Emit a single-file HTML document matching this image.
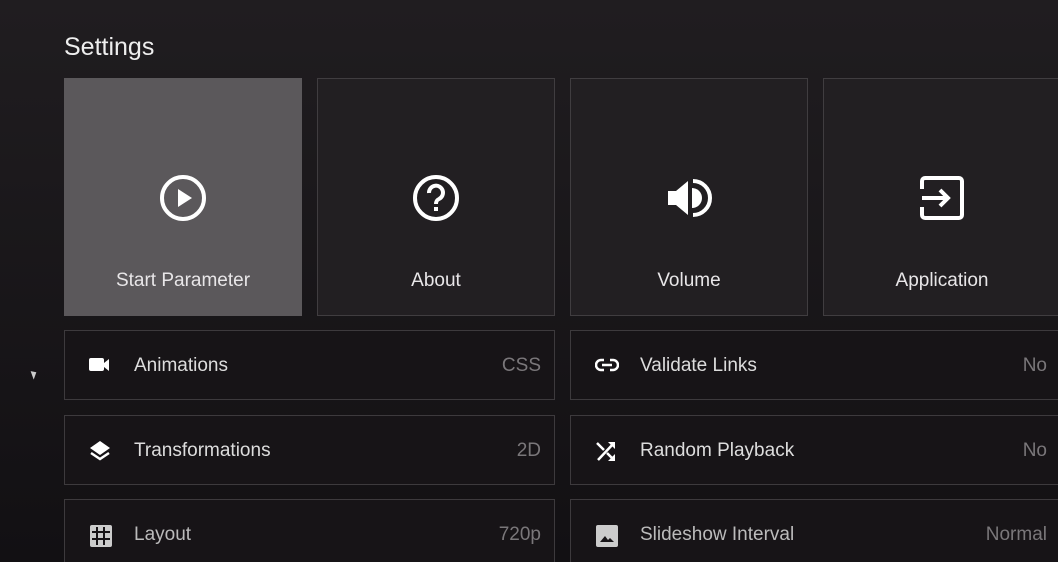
<!DOCTYPE html><html><head><style>
html,body{margin:0;width:1058px;height:562px;overflow:hidden}
body{background:linear-gradient(#201d20,#121013);font-family:"Liberation Sans",sans-serif;color:#e8e6e8;position:relative}
h1{position:absolute;left:64px;top:33px;margin:0;font-weight:normal;font-size:25px;color:#eee}
.t{position:absolute;top:78px;width:236px;height:236px;border:1px solid #403d40;background:#221f22}
.t.s{background:#5b585b;border-color:#5b585b}
.t svg{position:absolute;left:94px;top:95px}
.t span{position:absolute;left:0;right:0;top:191px;text-align:center;font-size:19px}
.r{position:absolute;height:68px;width:489px;border:1px solid #3d3a3d;background:#171417}
.r svg{position:absolute;left:24px;top:24px}
.r .l{position:absolute;left:69px;top:24px;font-size:19px;color:#ddd}
.r .v{position:absolute;right:13px;top:24px;font-size:19px;color:#7a777a}
</style></head><body>
<h1>Settings</h1>
<div class="t s" style="left:64px"><svg width="48" height="48" viewBox="0 0 48 48"><circle cx="24" cy="24" r="21" fill="none" stroke="#fff" stroke-width="4"/><path d="M19 15v18l14-9z" fill="#fff"/></svg><span>Start Parameter</span></div>
<div class="t" style="left:317px"><svg width="48" height="48" viewBox="0 0 48 48"><circle cx="24" cy="24" r="21" fill="none" stroke="#fff" stroke-width="4"/><path d="M17 19a7 7 0 1 1 10 6c-2 1-3 2-3 5" fill="none" stroke="#fff" stroke-width="4"/><rect x="22" y="33" width="4" height="4" fill="#fff"/></svg><span>About</span></div>
<div class="t" style="left:570px"><svg width="48" height="48" viewBox="0 0 48 48"><path d="M3 17h8l12-10v34L11 31H3z" fill="#fff"/><path d="M28 7a17 17 0 0 1 0 34" fill="none" stroke="#fff" stroke-width="4"/><path d="M27 14a10 10 0 0 1 0 20z" fill="#fff"/></svg><span>Volume</span></div>
<div class="t" style="left:823px"><svg width="48" height="48" viewBox="0 0 48 48"><path d="M4 15V7a3 3 0 0 1 3-3h34a3 3 0 0 1 3 3v34a3 3 0 0 1-3 3H7a3 3 0 0 1-3-3v-8" fill="none" stroke="#fff" stroke-width="4"/><path d="M4 24h26M22 16l8 8-8 8" fill="none" stroke="#fff" stroke-width="4"/></svg><span>Application</span></div>

<div class="r" style="left:64px;top:330px"><svg width="22" height="20" viewBox="0 0 22 20"><rect x="0" y="3" width="15" height="13" rx="2" fill="#fff"/><path d="M15 8l5-4v12l-5-4z" fill="#fff"/></svg><span class="l">Animations</span><span class="v">CSS</span></div>
<div class="r" style="left:64px;top:415px"><svg width="22" height="22" viewBox="0 0 22 22"><path d="M11 1l10 7-10 7-10-7z" fill="#fff"/><path d="M2 13l9 6 9-6" fill="none" stroke="#fff" stroke-width="2.5"/></svg><span class="l">Transformations</span><span class="v">2D</span></div>
<div class="r" style="left:64px;top:499px"><svg width="24" height="24" viewBox="0 0 24 24"><rect x="1" y="1" width="22" height="22" rx="2" fill="#ccc"/><path d="M3 8h18M3 15h18M8 3v18M15 3v18" stroke="#171417" stroke-width="2"/></svg><span class="l" style="color:#bbb">Layout</span><span class="v">720p</span></div>

<div class="r" style="left:570px;top:330px"><svg width="24" height="20" viewBox="0 0 24 20"><path d="M9 5H6a5 5 0 0 0 0 10h3M15 5h3a5 5 0 0 1 0 10h-3M7 10h10" fill="none" stroke="#fff" stroke-width="2.5"/></svg><span class="l">Validate Links</span><span class="v">No</span></div>
<div class="r" style="left:570px;top:415px"><svg width="22" height="22" viewBox="0 0 22 22"><path d="M2 3l7 7M12 13l7 7M3 20L19 3" fill="none" stroke="#fff" stroke-width="2.5"/><path d="M13 2h7v7zM13 21h7v-7z" fill="#fff"/></svg><span class="l">Random Playback</span><span class="v">No</span></div>
<div class="r" style="left:570px;top:499px"><svg width="24" height="24" viewBox="0 0 24 24"><rect x="1" y="1" width="22" height="22" rx="2" fill="#ccc"/><path d="M5 18l5-6 3 4 2-2 4 4z" fill="#171417"/></svg><span class="l" style="color:#bbb">Slideshow Interval</span><span class="v">Normal</span></div>
<div style="position:absolute;left:32px;top:370px;width:0;height:0;border-left:5px solid #ccc;border-top:3px solid transparent;border-bottom:6px solid transparent;transform:rotate(-20deg)"></div>
</body></html>
